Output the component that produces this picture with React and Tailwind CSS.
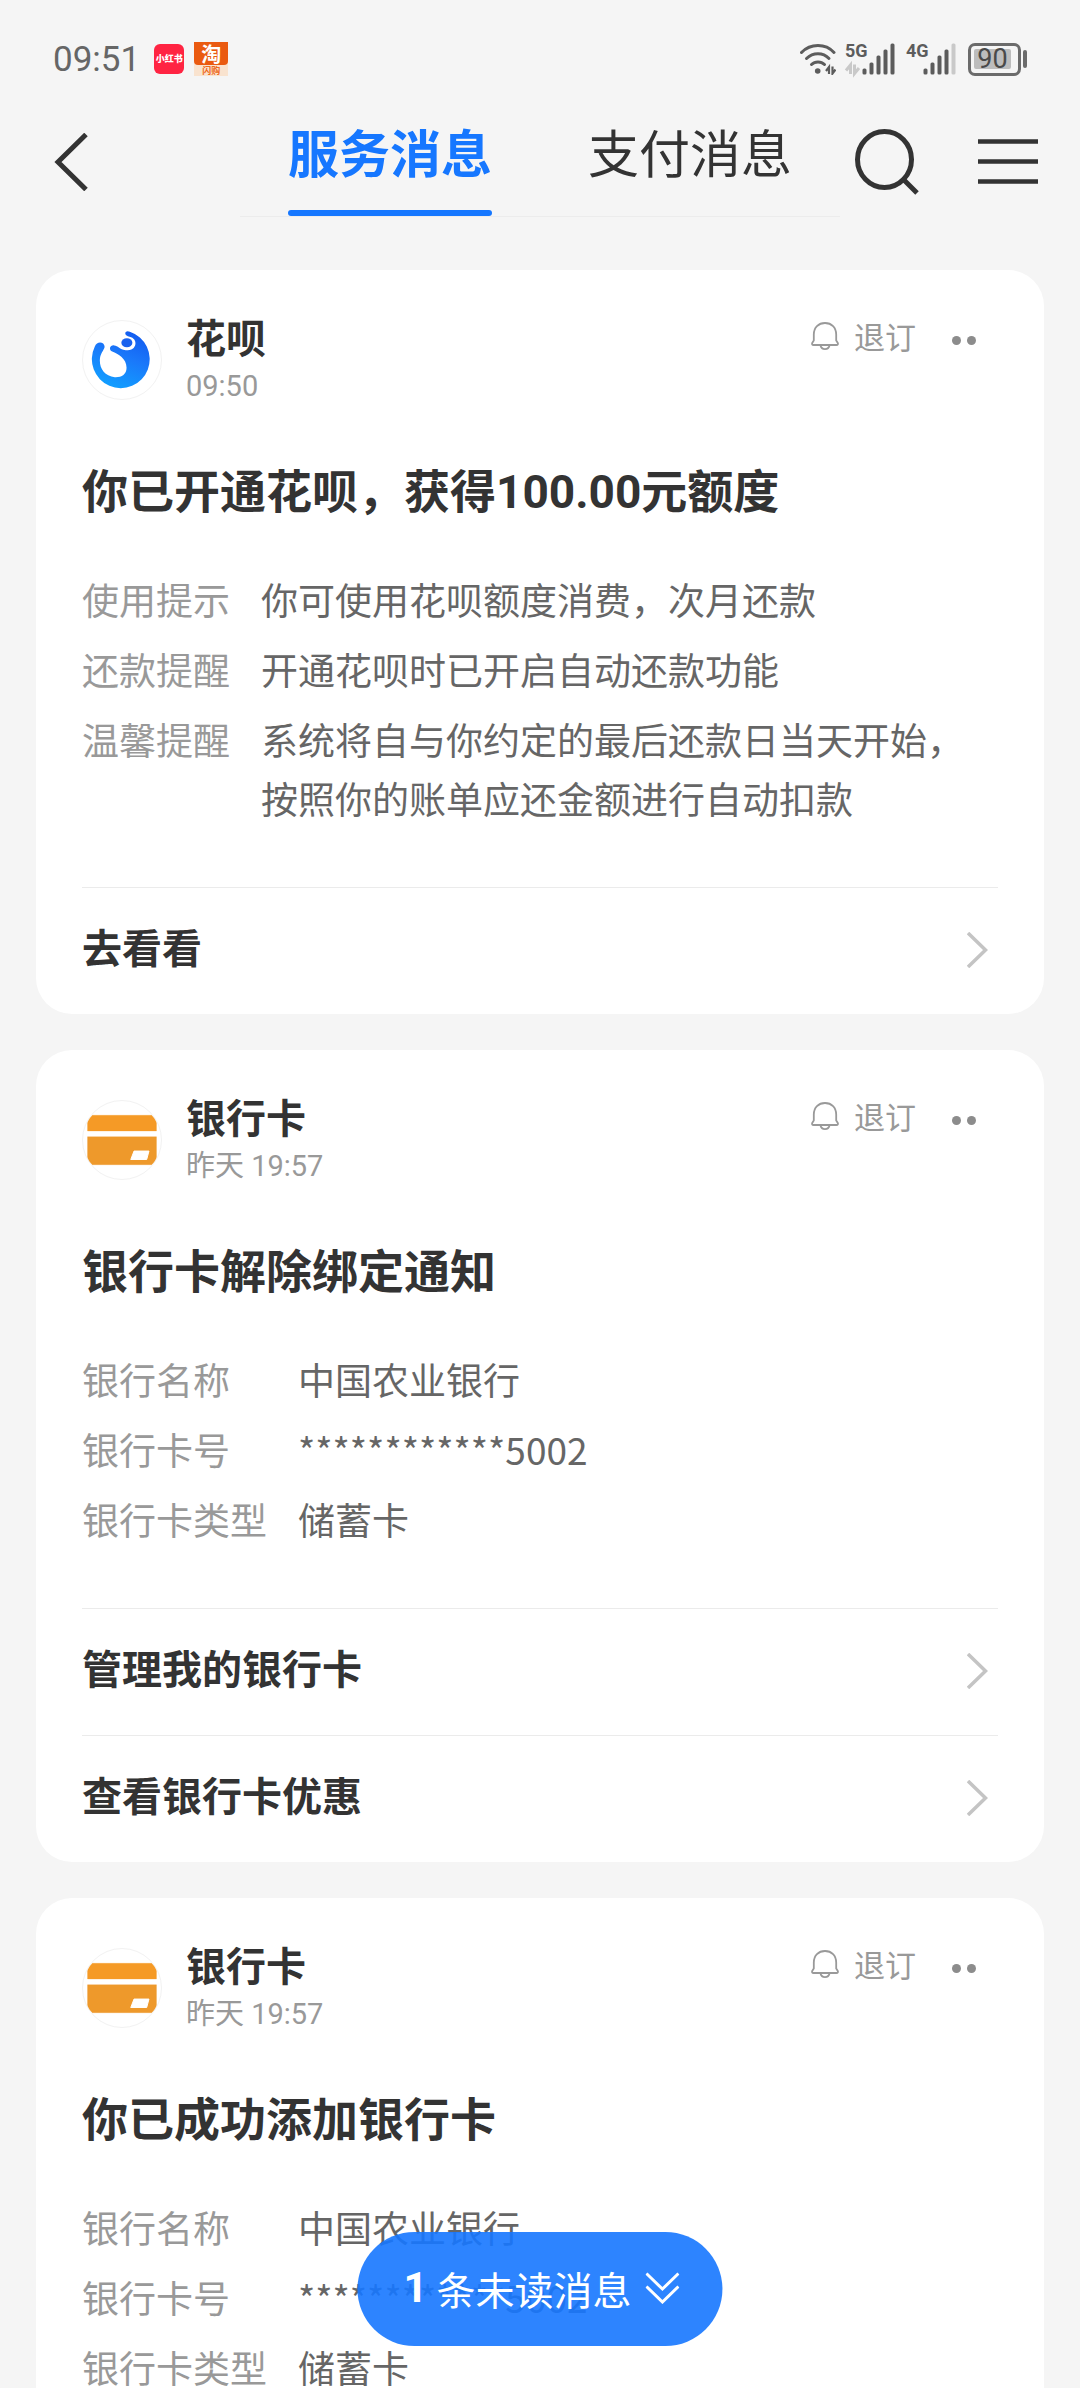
import React from "react";

function WifiIcon() {
  return (
    <svg className="h-8 w-9" viewBox="0 0 36 32" fill="none" stroke="#5c5c5c" strokeLinecap="round" aria-hidden="true">
      <path d="M1.5 9.5C10.5 .2 25.5 .2 34 9.5" strokeWidth="3" />
      <path d="M6.500 15.500C13 9 23 9 29 15.500" strokeWidth="3" />
      <path d="M11.500 21.500C15 18 21 18 24.500 21.500" strokeWidth="3" />
      <circle cx="17.700" cy="28" r="2.800" fill="#5c5c5c" stroke="none" />
      <path d="M29 31V24L26 28M32.500 23.500V30.500L35.500 26.500" strokeWidth="2.200" strokeLinecap="butt" />
    </svg>
  );
}

function SignalIcon({ label, weak, arrows }) {
  const bars = [
    [18, 6],
    [25, 12],
    [32, 19],
    [39, 25],
    [46, 31],
  ];
  return (
    <svg className="h-8 w-[50px] overflow-visible" viewBox="0 0 50 32" aria-label={label} role="img">
      <text x="0" y="14" fontSize="18" fontWeight="700" fontFamily="Roboto, sans-serif" fill="#5c5c5c">
        {label}
      </text>
      {bars.map(([x, h], i) => (
        <rect key={x} x={x - 0.5} y={31.5 - h} width="4" height={h} rx="1.500" fill={weak && i === 4 ? "#c9c9c9" : "#5c5c5c"} />
      ))}
      {arrows && (
        <path d="M5.500 31V22L1 27.500M9.500 21.500V30.500L14 25" fill="none" stroke="#c9c9c9" strokeWidth="3" />
      )}
    </svg>
  );
}

function StatusBar() {
  return (
    <div className="flex h-[118px] items-center justify-between pr-[53px] pl-[53px]">
      <div className="flex items-center">
        <span className="pt-[2px] font-[Roboto,sans-serif] text-[35px] leading-10 text-[#666666]">09:51</span>
        <span className="ml-[14px] flex size-[30px] items-center justify-center rounded-md bg-[#ff2442] text-[9px] leading-3 font-black text-white">
          小红书
        </span>
        <span className="ml-[10px] flex w-[34px] flex-col items-center bg-[#f9e3cf]">
          <span className="w-full rounded-b-sm bg-[#ea5a10] text-center text-[20px] leading-[23px] font-bold text-white">
            淘
          </span>
          <span className="text-[9px] leading-[11px] font-bold text-[#ee6a1c]">闪购</span>
        </span>
      </div>
      <div className="flex items-center">
        <WifiIcon />
        <span className="ml-[9px] flex">
          <SignalIcon label="5G" arrows />
        </span>
        <span className="ml-[11px] flex">
          <SignalIcon label="4G" weak />
        </span>
        <span className="ml-3 flex items-center gap-[2px]">
          <span className="flex h-[33px] w-[53px] items-center rounded-[7px] border-3 border-[#6b6b6b] pl-[3px]">
            <span className="flex h-5 w-[37px] items-center justify-center rounded-xs bg-[#bdbdbd] font-[Roboto,sans-serif] text-[27px] leading-5 text-[#4a4a4a]">
              90
            </span>
          </span>
          <span className="h-[18px] w-1 rounded-xs bg-[#6b6b6b]" />
        </span>
      </div>
    </div>
  );
}

function Header() {
  return (
    <header className="flex h-[99px] items-stretch">
      <div className="flex w-[240px] items-center pb-3 pl-[54px]">
        <button type="button" aria-label="返回">
          <svg className="h-[58px] w-[34px]" viewBox="0 0 34 58" fill="none" stroke="#333" strokeWidth="5" aria-hidden="true">
            <path d="M32 1.500L4 29l28 27.500" />
          </svg>
        </button>
      </div>
      <div role="tablist" className="flex flex-1 border-b border-[#ececec]">
        <button type="button" role="tab" aria-selected="true" className="flex flex-1 flex-col items-center justify-between">
          <span className="text-[51px] leading-[66px] font-bold text-[#1677ff]">服务消息</span>
          <span className="h-[6px] w-[204px] rounded-full bg-[#1677ff]" />
        </button>
        <button type="button" role="tab" aria-selected="false" className="flex flex-1 flex-col items-center">
          <span className="text-[51px] leading-[66px] text-[#333333]">支付消息</span>
        </button>
      </div>
      <div className="flex w-[240px] items-center justify-between pr-[42px] pb-3 pl-[15px]">
        <button type="button" aria-label="搜索">
          <svg className="h-[66px] w-[64px]" viewBox="0 0 64 66" fill="none" stroke="#333" strokeWidth="5" aria-hidden="true">
            <ellipse cx="29.500" cy="30.500" rx="27" ry="28" />
            <path d="M49 51l13 13" />
          </svg>
        </button>
        <button type="button" aria-label="菜单">
          <svg className="h-[45px] w-[60px]" viewBox="0 0 60 45" stroke="#333" strokeWidth="4.500" aria-hidden="true">
            <path d="M0 2.500h60M0 22.500h60M0 42.500h60" />
          </svg>
        </button>
      </div>
    </header>
  );
}

function HuabeiLogo() {
  return (
    <svg className="size-full" viewBox="0 0 240 240" aria-hidden="true">
      <defs>
        <linearGradient id="huabei" x1="0.900" y1="0" x2="0.500" y2="1">
          <stop offset="0" stopColor="#1257ee" />
          <stop offset="0.500" stopColor="#1a78fa" />
          <stop offset="1" stopColor="#129cff" />
        </linearGradient>
      </defs>
      <path
        fill="url(#huabei)"
        d="M36 79A89 89 0 1 0 144 33C130 26 124 42 138 47C156 50 165 61 160 76C154 90 140 92 127 89C112 86 108 76 96 75C82 74 78 88 90 94C108 102 134 115 134 144C134 165 118 174 98 173C66 170 50 145 52 118C53 102 60 96 66 82C70 66 44 58 36 79Z"
      />
      <ellipse cx="135" cy="67" rx="17" ry="14" fill="#1a62ee" />
    </svg>
  );
}

function BankCardLogo() {
  return (
    <svg className="size-full" viewBox="0 0 240 240" aria-hidden="true">
      <path d="M28 44H212L226 60V92H14V60Z" fill="#f59a26" stroke="#f59a26" strokeLinejoin="round" />
      <path d="M14 110H226V180L212 196H28L14 180Z" fill="#ee992b" stroke="#ee992b" strokeLinejoin="round" />
      <path d="M157 154H203L196 180H147Z" fill="#fff" stroke="#fff" strokeWidth="3" strokeLinejoin="round" />
    </svg>
  );
}

function BellIcon() {
  return (
    <svg className="size-7" viewBox="0 0 28 28" fill="none" stroke="#999" strokeWidth="1.800" strokeLinejoin="round" aria-hidden="true">
      <path d="M2.800 12.500C2.800 5.500 7.500 1 14 1S25.200 5.500 25.200 12.500V18.500L26.800 21C27.200 22.300 26.800 23 25.500 23H2.500C1.200 23 .8 22.300 1.200 21L2.800 18.500Z" />
      <path d="M9.500 23.500C10.500 28.200 17.500 28.200 18.500 23.500" />
    </svg>
  );
}

function MessageCard({ logo, name, time, title, rows, actions }) {
  return (
    <article className="rounded-[36px] bg-white px-[46px] pt-[41px]">
      <div className="flex h-[94px] items-start">
        <div className="mt-[9px] size-20 overflow-hidden rounded-full border border-[#f2f2f2]">{logo}</div>
        <div className="ml-6 flex-1">
          <div className="text-[40px] leading-[50px] font-bold text-[#333333]">{name}</div>
          <div className="font-[Roboto,'Noto_Sans_CJK_SC',sans-serif] text-[29px] leading-[50px] text-[#999999]">{time}</div>
        </div>
        <button type="button" className="flex h-[50px] items-center gap-[15px] text-[31px] leading-[50px] text-[#999999]">
          <BellIcon />
          退订
        </button>
        <button type="button" aria-label="更多" className="mr-[22px] ml-9 flex h-[50px] items-center gap-[6px] pt-2">
          <span className="size-[9px] rounded-full bg-[#8c8c8c]" />
          <span className="size-[9px] rounded-full bg-[#8c8c8c]" />
        </button>
      </div>
      <h2 className="mt-[57px] font-[Roboto,'Noto_Sans_CJK_SC',sans-serif] text-[46px] leading-[60px] font-bold text-[#333333]">{title}</h2>
      <dl className="mt-12 grid grid-cols-[auto_1fr] gap-x-[31px] gap-y-[11px] pb-[59px] text-[37px] leading-[59px]">
        {rows.map(([label, value]) => (
          <React.Fragment key={label}>
            <dt className="text-[#999999]">{label}</dt>
            <dd className="text-[#666666]">{value}</dd>
          </React.Fragment>
        ))}
      </dl>
      {actions.map((action) => (
        <a
          key={action}
          href="#"
          className="flex h-[127px] items-center justify-between border-t border-[#ebebeb] pr-[10px] pb-[2px] font-[Roboto,'Noto_Sans_CJK_SC',sans-serif] text-[40px] leading-[50px] font-bold text-[#333333]"
        >
          {action}
          <svg className="h-9 w-[21px]" viewBox="0 0 21 36" fill="none" stroke="#c4c4c4" strokeWidth="3.500" aria-hidden="true">
            <path d="M1 1l17.500 17L1 35" />
          </svg>
        </a>
      ))}
    </article>
  );
}

const messages = [
  {
    logo: <HuabeiLogo />,
    name: "花呗",
    time: "09:50",
    title: "你已开通花呗，获得100.00元额度",
    rows: [
      ["使用提示", "你可使用花呗额度消费，次月还款"],
      ["还款提醒", "开通花呗时已开启自动还款功能"],
      ["温馨提醒", "系统将自与你约定的最后还款日当天开始，按照你的账单应还金额进行自动扣款"],
    ],
    actions: ["去看看"],
  },
  {
    logo: <BankCardLogo />,
    name: "银行卡",
    time: "昨天 19:57",
    title: "银行卡解除绑定通知",
    rows: [
      ["银行名称", "中国农业银行"],
      ["银行卡号", "************5002"],
      ["银行卡类型", "储蓄卡"],
    ],
    actions: ["管理我的银行卡", "查看银行卡优惠"],
  },
  {
    logo: <BankCardLogo />,
    name: "银行卡",
    time: "昨天 19:57",
    title: "你已成功添加银行卡",
    rows: [
      ["银行名称", "中国农业银行"],
      ["银行卡号", "************5002"],
      ["银行卡类型", "储蓄卡"],
    ],
    actions: [],
  },
];

export default function App() {
  return (
    <div lang="zh-CN" className="relative flex h-screen flex-col overflow-hidden bg-[#f5f5f5] font-['Noto_Sans_CJK_SC',sans-serif]">
      <StatusBar />
      <Header />
      <main className="flex min-h-0 flex-1 flex-col gap-9 overflow-y-auto px-9 pt-[53px] [scrollbar-width:none]">
        {messages.map((message) => (
          <MessageCard key={message.title} {...message} />
        ))}
      </main>
      <button
        type="button"
        className="absolute bottom-[42px] left-1/2 flex h-[114px] -translate-x-1/2 items-center rounded-full bg-[#1677ff]/90 pr-[43px] pb-[3px] pl-[46px] text-[39px] leading-[50px] whitespace-nowrap text-white"
      >
        <span className="font-[Roboto,sans-serif] text-[42px] font-bold">1</span>
        <span className="ml-[9px]">条未读消息</span>
        <svg className="ml-[14px] h-8 w-[34px]" viewBox="0 0 34 32" fill="none" stroke="#fff" strokeWidth="3" aria-hidden="true">
          <path d="M1 1.500l16 15.500l16-15.500M1 14.500l16 15.500l16-15.500" />
        </svg>
      </button>
    </div>
  );
}
